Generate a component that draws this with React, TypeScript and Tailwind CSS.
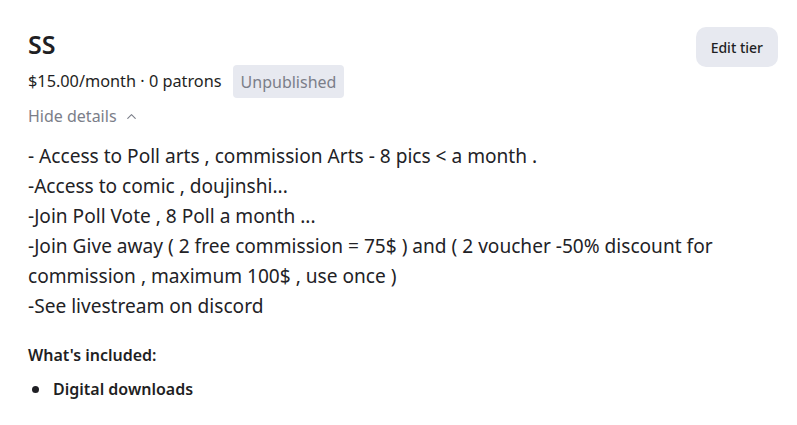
import { ChevronUp } from "lucide-react";

const perks = [
    "- Access to Poll arts , commission Arts - 8 pics < a month .",
    "-Access to comic , doujinshi...",
    "-Join Poll Vote , 8 Poll a month ...",
    "-Join Give away ( 2 free commission = 75$ ) and ( 2 voucher -50% discount for commission , maximum 100$ , use once )",
    "-See livestream on discord",
];

export default function App() {
    return (
        <main
            className="w-[797px] h-[425px] bg-white text-[#1f1f24] overflow-hidden"
            style={{ fontFamily: '"Noto Sans", "Open Sans", sans-serif' }}
        >
            <section className="flex justify-between pl-7 pr-[19px] pt-[27px]">
                <div className="flex flex-col">
                    <h1 className="text-[25px] leading-[34px] font-semibold">SS</h1>
                    <div className="flex items-center gap-[11px] mt-[4px]">
                        <span className="text-[16.3px]">$15.00/month · 0 patrons</span>
                        <span className="bg-[#e7e9f0] text-[#7b7e89] text-[16px] rounded-[4px] px-2 h-[33px] flex items-center">
                            Unpublished
                        </span>
                    </div>
                    <button className="flex items-center gap-[7px] text-[16px] text-[#7b7e89] mt-[2px] h-[32px]">
                        Hide details
                        <ChevronUp size={15} strokeWidth={1.8} />
                    </button>
                </div>
                <button className="bg-[#e7e9f0] rounded-[10px] h-[40px] px-[15px] text-[14px] font-medium">
                    Edit tier
                </button>
            </section>

            <div className="pl-7 pr-[50px] mt-[9px] text-[19.1px] leading-[30px] text-[#222226]">
                {perks.map((line) => (
                    <p key={line}>{line}</p>
                ))}
            </div>

            <section className="pl-7 mt-[23px]">
                <h2 className="text-[16px] font-semibold leading-[22px]">What's included:</h2>
                <ul className="mt-[12px]">
                    <li className="flex items-center gap-[14px] text-[16px] font-semibold leading-[22px]">
                        <span className="w-[7px] h-[7px] rounded-full bg-[#1f1f24] ml-[4px]" />
                        Digital downloads
                    </li>
                </ul>
            </section>
        </main>
    );
}
